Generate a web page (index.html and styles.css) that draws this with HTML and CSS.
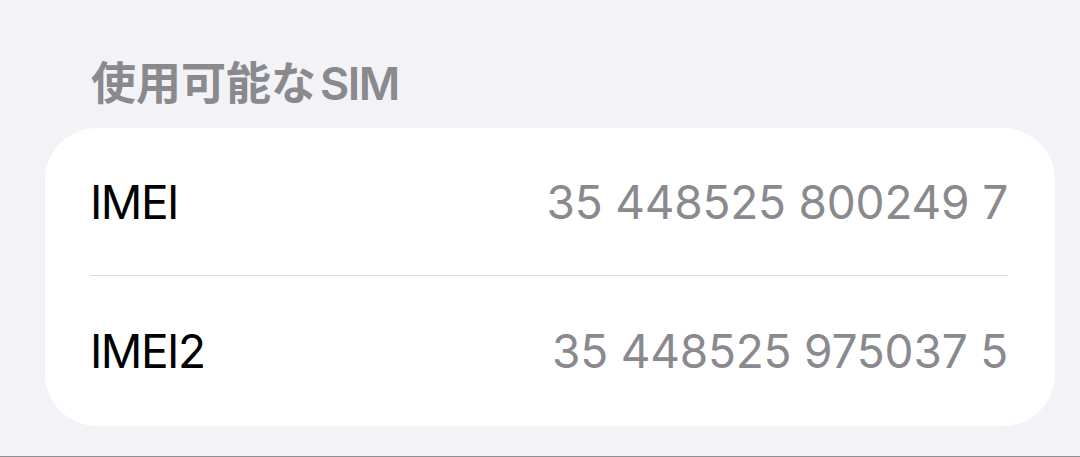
FILE: index.html
```html
<!DOCTYPE html>
<html lang="ja">
<head>
<meta charset="utf-8">
<link rel="stylesheet" href="styles.css">
</head>
<body>
<main class="screen">
  <h2 class="section-title">使用可能な<span class="latin">SIM</span></h2>
  <section class="card">
    <div class="row">
      <span class="label">IMEI</span>
      <span class="value">35 448525 800249 7</span>
    </div>
    <div class="row">
      <span class="label">IMEI2</span>
      <span class="value">35 448525 975037 5</span>
    </div>
  </section>
</main>
</body>
</html>
```
FILE: styles.css
```css
html, body {
  margin: 0;
  padding: 0;
}
body {
  background: #f2f2f7;
  font-family: Inter, "Noto Sans CJK JP", sans-serif;
}
.screen {
  height: 456px;
  border-bottom: 1px solid #8e8e93;
  overflow: hidden;
}
.section-title {
  margin: 0;
  padding: 57px 0 0 91px;
  height: 128px;
  box-sizing: border-box;
  font-size: 45px;
  line-height: 54px;
  font-weight: 600;
  color: #8a8a8e;
}
.latin {
  margin-left: 4px;
  letter-spacing: -1.5px;
}
.card {
  margin: 0 25px 0 45px;
  background: #ffffff;
  border-radius: 52px;
  padding: 0 47px 0 45px;
}
.row {
  display: flex;
  justify-content: space-between;
  align-items: center;
  height: 147px;
}
.row + .row {
  border-top: 1.5px solid #dcdce0;
  height: 150px;
}
.label {
  font-size: 46px;
  letter-spacing: -1.5px;
  color: #000;
}
.value {
  font-size: 46px;
  letter-spacing: -0.2px;
  color: #8a8a8e;
}
```
